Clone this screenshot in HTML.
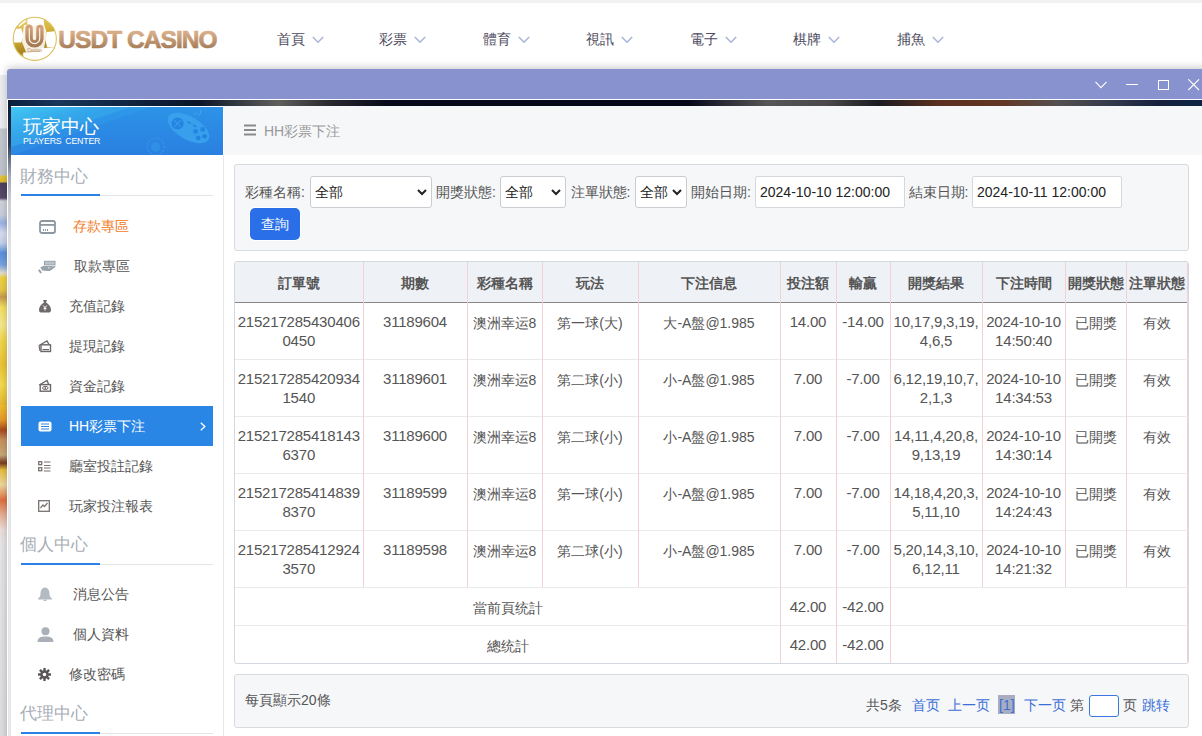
<!DOCTYPE html>
<html><head><meta charset="utf-8">
<style>
*{box-sizing:border-box;margin:0;padding:0}
html,body{width:1202px;height:736px;overflow:hidden;background:#fff;font-family:"Liberation Sans",sans-serif;color:#555}
.abs{position:absolute}
#topstrip{left:0;top:0;width:1202px;height:3px;background:#f1f1f1}
#header{left:0;top:3px;width:1202px;height:72px;background:#fff}
.nav{position:absolute;top:28px;font-size:14px;color:#4d4b5e;line-height:16px;white-space:nowrap}
.nav svg{position:absolute;left:35px;top:5px}
#bgstrip{left:0;top:75px;width:8px;height:661px;background:linear-gradient(180deg,#eceef1 0px,#eeeff2 53px,#c4c9d1 54px,#bfc4cc 100px,#e6c43a 101px,#e0bc30 107px,#4e4262 108px,#574a68 123px,#d2d4da 126px,#c8cedc 140px,#9ab4e4 148px,#d8def0 158px,#c4d2ee 168px,#5c90dc 178px,#7aa4e2 190px,#e4e0d0 198px,#f0d242 203px,#e8c848 215px,#c89a50 222px,#f4e060 232px,#f6ea90 250px,#f2d84e 265px,#ecc438 290px,#f4dc50 310px,#e8b830 330px,#f0c030 325px,#e89a28 345px,#a84a20 355px,#c89060 365px,#c8a878 380px,#7a3a20 388px,#e8c040 395px,#f0d8a0 410px,#e07040 425px,#e8b098 440px,#ece0dc 455px,#e6e6e8 470px,#dedee0 661px)}
#win{left:7px;top:69px;width:1220px;height:700px;box-shadow:0 -1px 9px rgba(0,0,0,.24);border-radius:3px 3px 0 0;background:#fff}
#title{left:0;top:0;width:1220px;height:30px;background:#8792cf;border-radius:3px 3px 0 0}
#strip{left:1px;top:31px;width:1219px;height:6px;background:linear-gradient(90deg,#0b1e3e 0px,#173659 50px,#0a1528 190px,#5f5f5c 270px,#2a2a30 320px,#060a1a 380px,#05081a 680px,#575757 760px,#4a4848 820px,#1a1a22 870px,#5a3020 930px,#633523 990px,#545050 1050px,#30364a 1110px,#16203e 1150px,#0c2444 1195px)}
#leftedge{left:1px;top:31px;width:2.5px;height:680px;background:linear-gradient(180deg,#0b1a35 0,#1a2640 25px,#2e3a54 45px,#6a7488 60px,#a0a8b8 75px,#c8ccd3 100px,#e2e4e7 150px,#e8e8ea 680px)}
#side{left:10.5px;top:106px;width:213px;height:640px;background:#fff;border-right:1px solid #e4e6ea}
#sidehead{left:10.5px;top:106.5px;width:212.5px;height:48px;background:#2a8ae4;overflow:hidden}
.sec{position:absolute;left:20px;font-size:17px;color:#a7adb5;line-height:20px}
.secline{position:absolute;left:21px;width:192px;height:1px;background:#e1e4e8}
.secline:before{content:"";position:absolute;left:0;top:-1px;width:79px;height:2px;background:#2b82e4}
.item{position:absolute;left:21px;width:192px;height:40px;font-size:14px;color:#555;line-height:40px}
.item .t{position:absolute;left:48px;top:0}
.item svg{position:absolute;left:17px;top:13px}
.item.sel{background:#2a86e5;color:#fff}
#main{left:223px;top:106px;width:979px;height:630px;background:#fff}
#crumb{left:224px;top:106px;width:978px;height:49px;background:#f6f7f9}
.panel{position:absolute;background:#f6f7f9;border:1px solid #d7dbdf;border-radius:3px}
.lbl{position:absolute;font-size:14px;color:#555;line-height:16px;top:184px}
.sel-box{position:absolute;top:176px;height:32px;background:#fff;border:1px solid #c9cdd2;border-radius:3px;font-size:14px;color:#222;line-height:30px;padding-left:4px}
.sel-box svg{position:absolute;right:4.5px;top:12px}
.inp{position:absolute;top:176px;width:150px;height:32px;background:#fff;border:1px solid #d5d8dc;border-radius:2px;font-size:14px;color:#222;line-height:30px;padding-left:4px}
#btn{left:250px;top:208px;width:50px;height:32px;background:#2b6fe8;border-radius:5px;color:#fff;font-size:14px;line-height:32px;text-align:center;box-shadow:0 0 0 1px #fff}
.th{position:absolute;top:0.5px;height:40px;line-height:40px;text-align:center;font-weight:bold;font-size:14px;color:#555;white-space:nowrap}
.td.s{padding-top:2px;line-height:37px}
.td.s.n{padding-top:0}
.td.n{font-size:15px;letter-spacing:-0.2px;padding-top:9px}
.td{position:absolute;text-align:center;font-size:14px;line-height:19px;padding-top:11px;color:#555;white-space:nowrap}
</style></head><body>
<div id="topstrip" class="abs"></div>
<div id="header" class="abs">
  <svg class="abs" style="left:10px;top:11px" width="50" height="50" viewBox="0 0 50 50">
    <defs>
      <linearGradient id="gold" x1="0" y1="0" x2="0.3" y2="1">
        <stop offset="0" stop-color="#ecd77e"/><stop offset="0.45" stop-color="#d7b53c"/><stop offset="0.8" stop-color="#a98420"/><stop offset="1" stop-color="#e4cf7a"/>
      </linearGradient>
      <linearGradient id="bronze" x1="0" y1="0" x2="0" y2="1">
        <stop offset="0" stop-color="#d2a07a"/><stop offset="1" stop-color="#a57a55"/>
      </linearGradient>
    </defs>
    <circle cx="24.8" cy="24.8" r="21.6" fill="url(#gold)"/>
    <g fill="#fff">
      <polygon points="17.3,3.6 33.6,3.6 34,10.2 26,11.5 17.3,10.2"/>
      <polygon points="3.5,15 11.2,14.6 13.5,22 11.2,28.5 3.5,28.5"/>
      <polygon points="37,18 46.5,17 47,26 46.5,33.3 37,33.3 35.5,26"/>
      <polygon points="13.2,38.5 30,37.7 30,47 20,47 13.2,44"/>
      <polygon points="30,34.5 44,33.3 42,42 30,45"/>
      <polygon points="8,11.5 15.5,5.8 16.3,7.2 9,12.8"/>
      <polygon points="14,11 34,10 37,20 34,34 30,37 16,38 12,28 13,18" opacity="0.85"/>
    </g>
    <circle cx="24.8" cy="24.8" r="21.6" fill="none" stroke="#dcc060" stroke-width="1.1"/>
    <path d="M19.1,14.4 V24.5 A5.4,5.4 0 0 0 29.9,24.5 V14.4" fill="none" stroke="url(#bronze)" stroke-width="7.4" stroke-linecap="round"/>
    <path d="M19.3,14.6 V24.5 A5.2,5.2 0 0 0 29.7,24.5 V14.6" fill="none" stroke="#fbf4ea" stroke-width="1.2" stroke-linecap="round"/>
    <text x="24.5" y="38.3" font-family="Liberation Sans" font-size="4.6" font-weight="bold" fill="#caa78e" text-anchor="middle" letter-spacing="-0.1">Casino</text>
  </svg>
  <svg class="abs" style="left:57px;top:19px" width="170" height="30" viewBox="0 0 170 30">
    <defs>
      <linearGradient id="tg" x1="0" y1="0" x2="0" y2="1">
        <stop offset="0.25" stop-color="#d7ad87"/><stop offset="0.9" stop-color="#9f7652"/>
      </linearGradient>
    </defs>
    <text x="1.3" y="26.1" font-family="Liberation Sans" font-weight="bold" font-size="24.5" letter-spacing="-0.95" fill="url(#tg)" stroke="url(#tg)" stroke-width="0.7">USDT CASINO</text>
  </svg>
  <div class="nav" style="left:276.5px">首頁<svg width="12" height="8" viewBox="0 0 12 8"><path d="M0.8,1 L6,6.2 L11.2,1" fill="none" stroke="#a9b3d6" stroke-width="1.5"/></svg></div>
  <div class="nav" style="left:379.0px">彩票<svg width="12" height="8" viewBox="0 0 12 8"><path d="M0.8,1 L6,6.2 L11.2,1" fill="none" stroke="#a9b3d6" stroke-width="1.5"/></svg></div>
  <div class="nav" style="left:482.5px">體育<svg width="12" height="8" viewBox="0 0 12 8"><path d="M0.8,1 L6,6.2 L11.2,1" fill="none" stroke="#a9b3d6" stroke-width="1.5"/></svg></div>
  <div class="nav" style="left:586.0px">視訊<svg width="12" height="8" viewBox="0 0 12 8"><path d="M0.8,1 L6,6.2 L11.2,1" fill="none" stroke="#a9b3d6" stroke-width="1.5"/></svg></div>
  <div class="nav" style="left:689.5px">電子<svg width="12" height="8" viewBox="0 0 12 8"><path d="M0.8,1 L6,6.2 L11.2,1" fill="none" stroke="#a9b3d6" stroke-width="1.5"/></svg></div>
  <div class="nav" style="left:793.0px">棋牌<svg width="12" height="8" viewBox="0 0 12 8"><path d="M0.8,1 L6,6.2 L11.2,1" fill="none" stroke="#a9b3d6" stroke-width="1.5"/></svg></div>
  <div class="nav" style="left:896.5px">捕魚<svg width="12" height="8" viewBox="0 0 12 8"><path d="M0.8,1 L6,6.2 L11.2,1" fill="none" stroke="#a9b3d6" stroke-width="1.5"/></svg></div>
  
</div>
<div id="bgstrip" class="abs"></div>
<div id="win" class="abs">
  <div id="title" class="abs">
    <svg class="abs" style="left:1087.5px;top:12px" width="13" height="8" viewBox="0 0 13 8"><path d="M0.5,0.8 L6,6.6 L11.5,0.8" fill="none" stroke="#fff" stroke-width="1.1"/></svg>
    <div class="abs" style="left:1119px;top:15px;width:12px;height:1.3px;background:#fff"></div>
    <div class="abs" style="left:1151px;top:11px;width:11px;height:10px;border:1.2px solid #fff"></div>
    <svg class="abs" style="left:1181px;top:10px" width="12" height="12" viewBox="0 0 12 12"><path d="M0.3,0.3 L11,11 M11,0.3 L0.3,11" stroke="#fff" stroke-width="1.1"/></svg>
  </div>
  <div id="strip" class="abs"></div>
  <div id="leftedge" class="abs"></div>
</div>
<div id="side" class="abs"></div>
<div id="sidehead" class="abs">
  <svg class="abs" style="left:0;top:0" width="213" height="49" viewBox="0 0 213 49">
    <defs>
      <linearGradient id="shg" x1="0" y1="0" x2="1" y2="1" gradientUnits="objectBoundingBox">
        <stop offset="0" stop-color="#44cdf4"/><stop offset="0.35" stop-color="#36aaeb"/><stop offset="1" stop-color="#2a8ae4"/>
      </linearGradient>
      <linearGradient id="shb" x1="0" y1="0" x2="0" y2="1">
        <stop offset="0" stop-color="#2c93e8"/><stop offset="1" stop-color="#2a7fe0"/>
      </linearGradient>
    </defs>
    <rect x="0" y="0" width="213" height="49" fill="url(#shb)"/>
    <polygon points="0,0 120,0 0,40" fill="url(#shg)" opacity="0.9"/>
    <polygon points="0,38 110,0 140,0 0,49" fill="#35a6ec" opacity="0.25"/>
    <g opacity="0.9">
      <ellipse cx="177.5" cy="21" rx="23" ry="11.5" transform="rotate(30 177.5 21)" fill="#3aa2ee"/>
      <circle cx="166.6" cy="16.6" r="6" fill="#2384e2"/>
      <path d="M163,13 L170,20 M170,13 L163,20" stroke="#3597ea" stroke-width="1.6"/>
      <path d="M176.5,14.8 L180,16.6 M182,18 L185.5,19.8" stroke="#2384e2" stroke-width="1.6"/>
      <circle cx="184.6" cy="24.4" r="2.4" fill="#2384e2"/><circle cx="191.7" cy="22.4" r="2.4" fill="#2384e2"/><circle cx="187.3" cy="31" r="2.4" fill="#2384e2"/><circle cx="193.6" cy="29.3" r="2.4" fill="#2384e2"/>
      <path d="M183,7.8 C184,4.5 186,6.5 187.5,7.5 C189,8.5 190,6 189.5,3" stroke="#48aaf0" stroke-width="1" fill="none"/>
    </g>
    <circle cx="144.7" cy="39.5" r="8.5" fill="none" stroke="#3d9cec" stroke-width="1.2" stroke-dasharray="2 1.5" opacity="0.7"/>
    <circle cx="144.7" cy="40" r="4.5" fill="#3598ea" opacity="0.6"/>
  </svg>
  <div class="abs" style="left:12.5px;top:9px;font-size:19px;line-height:22px;color:#fff">玩家中心</div>
  <div class="abs" style="left:12.5px;top:29px;font-size:8.8px;line-height:10px;color:#fff;word-spacing:1.5px;letter-spacing:-0.2px">PLAYERS CENTER</div>
</div>
<div class="sec" style="top:166.5px">財務中心</div><div class="secline" style="top:194.5px"></div>
<div class="item" style="top:206px"><svg style="left:17.5px;top:13.5px" width="17" height="14" viewBox="0 0 17 14"><rect x="1" y="1" width="15" height="12" rx="2" fill="none" stroke="#8e979f" stroke-width="1.8"/><rect x="1" y="4" width="15" height="1.8" fill="#8e979f"/><rect x="4" y="9" width="1" height="2" fill="#8e979f"/><rect x="6" y="9" width="1" height="2" fill="#8e979f"/><rect x="8" y="9" width="1" height="2" fill="#8e979f"/></svg><span class="t" style="left:52px"><span style="color:#f07b26">存款專區</span></span></div>
<div class="item" style="top:246px"><svg style="left:17px;top:14px" width="19" height="14" viewBox="0 0 19 14"><rect x="6.5" y="1.3" width="10.5" height="3.6" fill="#bcc4cb" stroke="#97a2ab" stroke-width="1"/><path d="M2.3,7.6 L5,6 H14 Q15.3,6.4 14,7.5 H9.6 L10.6,8.6 L16.2,6 Q17.8,5.6 17.4,7 L12.6,10.4 Q11.2,11.2 9.2,11 L4.4,10.6 Z" fill="#97a2ab"/><path d="M0.8,9.8 L3.2,13" stroke="#97a2ab" stroke-width="2"/></svg><span class="t" style="left:52.5px">取款專區</span></div>
<div class="item" style="top:286px"><svg style="left:17px;top:13px" width="14" height="14" viewBox="0 0 14 14"><path d="M5,1 H9 L8,3.5 C11,5 13,8 13,11 C13,13 12,13.5 10,13.5 H4 C2,13.5 1,13 1,11 C1,8 3,5 6,3.5 Z" fill="#6f6a6a"/><path d="M5.2,6.5 L7,8.5 L8.8,6.5 M7,8.5 V11.5 M5.5,9.3 H8.5" stroke="#fff" stroke-width="1" fill="none"/></svg><span class="t" style="left:48px">充值記錄</span></div>
<div class="item" style="top:326px"><svg style="left:17px;top:14px" width="14" height="13" viewBox="0 0 14 13"><path d="M1,5.5 L9,1 L11,4.5" fill="none" stroke="#6d6868" stroke-width="1.4"/><path d="M1,5.5 L2,11" stroke="#6d6868" stroke-width="1.2"/><rect x="3" y="4.8" width="9.5" height="6.7" fill="none" stroke="#6d6868" stroke-width="1.4"/><rect x="4.5" y="9" width="6.5" height="1.2" fill="#6d6868"/></svg><span class="t" style="left:48px">提現記錄</span></div>
<div class="item" style="top:366px"><svg style="left:17px;top:13px" width="14" height="14" viewBox="0 0 14 14"><path d="M1.3,6 L9,1.5 L10.5,5" fill="none" stroke="#6d6868" stroke-width="1.4"/><rect x="2.2" y="5.6" width="10.3" height="6.6" fill="none" stroke="#6d6868" stroke-width="1.4"/><ellipse cx="7.3" cy="8.9" rx="2.8" ry="1.6" fill="none" stroke="#6d6868" stroke-width="1"/><rect x="6.7" y="7.6" width="1.2" height="2.6" fill="#6d6868"/></svg><span class="t" style="left:48px">資金記錄</span></div>
<div class="item sel" style="top:406px"><svg style="left:17px;top:14.5px" width="14" height="11" viewBox="0 0 14 11"><rect x="0.5" y="0.5" width="13" height="10" rx="2" fill="#fff"/><path d="M3,3 H11 M3,5.5 H11 M3,8 H11" stroke="#2a86e5" stroke-width="1.2"/></svg><span class="t" style="left:48px">HH彩票下注</span><svg style="left:178.5px;top:15.5px" width="6" height="9" viewBox="0 0 6 9"><path d="M0.8,0.8 L4.8,4.5 L0.8,8.2" fill="none" stroke="#fff" stroke-width="1.3"/></svg></div>
<div class="item" style="top:446px"><svg style="left:17px;top:14.5px" width="13" height="11" viewBox="0 0 13 11"><rect x="0.7" y="0.7" width="3" height="3" fill="none" stroke="#7a7070" stroke-width="1.3"/><rect x="0.7" y="6.7" width="3" height="3" fill="none" stroke="#7a7070" stroke-width="1.3"/><path d="M6,1 H12.5 M6,4.5 H12.5 M6,7 H12.5 M6,10 H12.5" stroke="#7a7070" stroke-width="1.2"/></svg><span class="t" style="left:48px">廳室投註記錄</span></div>
<div class="item" style="top:486px"><svg style="left:17px;top:14px" width="12" height="12" viewBox="0 0 12 12"><rect x="0.7" y="0.7" width="10.6" height="10.6" fill="none" stroke="#7a7070" stroke-width="1.3"/><path d="M2.5,8 L5,5 L6.5,6.5 L9.5,3" fill="none" stroke="#7a7070" stroke-width="1.2"/></svg><span class="t" style="left:48px">玩家投注報表</span></div>
<div class="sec" style="top:534.5px">個人中心</div><div class="secline" style="top:563.5px"></div>
<div class="item" style="top:574px"><svg style="left:16px;top:12.5px" width="16" height="15" viewBox="0 0 16 15"><path d="M8,0.5 C4.5,1 3.5,4 3.5,7 C3.5,9.5 2.5,10.5 1,11.5 V12.5 H15 V11.5 C13.5,10.5 12.5,9.5 12.5,7 C12.5,4 11.5,1 8,0.5 Z" fill="#b4bac1"/><path d="M6.5,13.3 H9.5" stroke="#b4bac1" stroke-width="1.3"/></svg><span class="t" style="left:51.5px">消息公告</span></div>
<div class="item" style="top:614px"><svg style="left:16px;top:12.5px" width="17" height="15" viewBox="0 0 17 15"><circle cx="8.5" cy="4.3" r="4" fill="#a9b0b8"/><path d="M0.5,15 C0.5,10.5 4,9.5 8.5,9.5 C13,9.5 16.5,10.5 16.5,15 Z" fill="#a9b0b8"/></svg><span class="t" style="left:51.5px">個人資料</span></div>
<div class="item" style="top:654px"><svg style="left:17px;top:14px" width="13" height="13" viewBox="0 0 13 13"><g fill="#5b5656"><circle cx="6.5" cy="6.5" r="4.3"/><rect x="5.3" y="0" width="2.4" height="13"/><rect x="0" y="5.3" width="13" height="2.4"/><rect x="5.3" y="0" width="2.4" height="13" transform="rotate(45 6.5 6.5)"/><rect x="5.3" y="0" width="2.4" height="13" transform="rotate(-45 6.5 6.5)"/></g><circle cx="6.5" cy="6.5" r="1.8" fill="#fff"/></svg><span class="t" style="left:48px">修改密碼</span></div>
<div class="sec" style="top:704px">代理中心</div><div class="secline" style="top:732.5px"></div>

<div id="main" class="abs"></div>
<div class="abs" style="left:223px;top:155px;width:1px;height:600px;background:#e4e8ec"></div>
<div id="crumb" class="abs">
  <svg class="abs" style="left:20px;top:18px" width="12" height="12" viewBox="0 0 12 12"><path d="M0,1.5 H12 M0,6 H12 M0,10.5 H12" stroke="#8a8a8a" stroke-width="1.8"/></svg>
  <div class="abs" style="left:40px;top:16.5px;font-size:14px;line-height:16px;color:#999">HH彩票下注</div>
</div>
<div class="panel" style="left:234px;top:164px;width:955px;height:87px"></div>
<div class="lbl" style="left:245px">彩種名稱:</div>
<div class="sel-box" style="left:310px;width:122px">全部<svg width="10" height="7" viewBox="0 0 10 7"><path d="M1,1 L5,5 L9,1" fill="none" stroke="#222" stroke-width="2"/></svg></div>
<div class="lbl" style="left:436px">開獎狀態:</div>
<div class="sel-box" style="left:500px;width:66px">全部<svg width="10" height="7" viewBox="0 0 10 7"><path d="M1,1 L5,5 L9,1" fill="none" stroke="#222" stroke-width="2"/></svg></div>
<div class="lbl" style="left:570.5px">注單狀態:</div>
<div class="sel-box" style="left:635px;width:52px">全部<svg width="10" height="7" viewBox="0 0 10 7"><path d="M1,1 L5,5 L9,1" fill="none" stroke="#222" stroke-width="2"/></svg></div>
<div class="lbl" style="left:691px">開始日期:</div>
<div class="inp" style="left:755px">2024-10-10 12:00:00</div>
<div class="lbl" style="left:908.5px">結束日期:</div>
<div class="inp" style="left:972px">2024-10-11 12:00:00</div>
<div id="btn" class="abs">查詢</div>
<div id="tbl" class="abs" style="left:234px;top:261px;width:955px;height:403px;border:1px solid #d3d9de;border-radius:3px;overflow:hidden;background:#fff">
<div class="abs" style="left:0;top:0;width:100%;height:40px;background:#eef1f5"></div>
<div class="abs" style="left:0;top:40px;width:100%;height:1px;background:#8e8686"></div>
<div class="abs" style="left:952px;top:0;width:1px;height:402px;background:#f3d0d3"></div>
<div class="abs" style="left:0;top:97px;width:100%;height:1px;background:#eaeaea"></div>
<div class="abs" style="left:0;top:154px;width:100%;height:1px;background:#eaeaea"></div>
<div class="abs" style="left:0;top:211px;width:100%;height:1px;background:#eaeaea"></div>
<div class="abs" style="left:0;top:268px;width:100%;height:1px;background:#eaeaea"></div>
<div class="abs" style="left:0;top:325px;width:100%;height:1px;background:#eaeaea"></div>
<div class="abs" style="left:0;top:363px;width:100%;height:1px;background:#eaeaea"></div>
<div class="abs" style="left:128px;top:0;width:1px;height:325px;background:#f3d0d3"></div>
<div class="abs" style="left:232px;top:0;width:1px;height:325px;background:#f3d0d3"></div>
<div class="abs" style="left:307px;top:0;width:1px;height:325px;background:#f3d0d3"></div>
<div class="abs" style="left:403px;top:0;width:1px;height:325px;background:#f3d0d3"></div>
<div class="abs" style="left:545px;top:0;width:1px;height:402px;background:#f3d0d3"></div>
<div class="abs" style="left:601px;top:0;width:1px;height:402px;background:#f3d0d3"></div>
<div class="abs" style="left:655px;top:0;width:1px;height:402px;background:#f3d0d3"></div>
<div class="abs" style="left:747px;top:0;width:1px;height:325px;background:#f3d0d3"></div>
<div class="abs" style="left:830px;top:0;width:1px;height:325px;background:#f3d0d3"></div>
<div class="abs" style="left:891px;top:0;width:1px;height:325px;background:#f3d0d3"></div>
<div class="th" style="left:-0.5px;width:128.5px">訂單號</div>
<div class="th" style="left:128px;width:104px">期數</div>
<div class="th" style="left:232px;width:75px">彩種名稱</div>
<div class="th" style="left:307px;width:96px">玩法</div>
<div class="th" style="left:403px;width:142px">下注信息</div>
<div class="th" style="left:545px;width:56px">投注額</div>
<div class="th" style="left:601px;width:54px">輸贏</div>
<div class="th" style="left:655px;width:92px">開獎結果</div>
<div class="th" style="left:747px;width:83px">下注時間</div>
<div class="th" style="left:830px;width:61px">開獎狀態</div>
<div class="th" style="left:891px;width:62px">注單狀態</div>
<div class="td n" style="left:-0.5px;width:128.5px;top:41px">215217285430406<br>0450</div>
<div class="td n" style="left:128px;width:104px;top:41px">31189604</div>
<div class="td" style="left:232px;width:75px;top:41px">澳洲幸运8</div>
<div class="td" style="left:307px;width:96px;top:41px">第一球(大)</div>
<div class="td" style="left:403px;width:142px;top:41px">大-A盤@1.985</div>
<div class="td n" style="left:545px;width:56px;top:41px">14.00</div>
<div class="td n" style="left:601px;width:54px;top:41px">-14.00</div>
<div class="td n" style="left:655px;width:92px;top:41px">10,17,9,3,19,<br>4,6,5</div>
<div class="td n" style="left:747px;width:83px;top:41px">2024-10-10<br>14:50:40</div>
<div class="td" style="left:830px;width:61px;top:41px">已開獎</div>
<div class="td" style="left:891px;width:62px;top:41px">有效</div>
<div class="td n" style="left:-0.5px;width:128.5px;top:98px">215217285420934<br>1540</div>
<div class="td n" style="left:128px;width:104px;top:98px">31189601</div>
<div class="td" style="left:232px;width:75px;top:98px">澳洲幸运8</div>
<div class="td" style="left:307px;width:96px;top:98px">第二球(小)</div>
<div class="td" style="left:403px;width:142px;top:98px">小-A盤@1.985</div>
<div class="td n" style="left:545px;width:56px;top:98px">7.00</div>
<div class="td n" style="left:601px;width:54px;top:98px">-7.00</div>
<div class="td n" style="left:655px;width:92px;top:98px">6,12,19,10,7,<br>2,1,3</div>
<div class="td n" style="left:747px;width:83px;top:98px">2024-10-10<br>14:34:53</div>
<div class="td" style="left:830px;width:61px;top:98px">已開獎</div>
<div class="td" style="left:891px;width:62px;top:98px">有效</div>
<div class="td n" style="left:-0.5px;width:128.5px;top:155px">215217285418143<br>6370</div>
<div class="td n" style="left:128px;width:104px;top:155px">31189600</div>
<div class="td" style="left:232px;width:75px;top:155px">澳洲幸运8</div>
<div class="td" style="left:307px;width:96px;top:155px">第二球(小)</div>
<div class="td" style="left:403px;width:142px;top:155px">小-A盤@1.985</div>
<div class="td n" style="left:545px;width:56px;top:155px">7.00</div>
<div class="td n" style="left:601px;width:54px;top:155px">-7.00</div>
<div class="td n" style="left:655px;width:92px;top:155px">14,11,4,20,8,<br>9,13,19</div>
<div class="td n" style="left:747px;width:83px;top:155px">2024-10-10<br>14:30:14</div>
<div class="td" style="left:830px;width:61px;top:155px">已開獎</div>
<div class="td" style="left:891px;width:62px;top:155px">有效</div>
<div class="td n" style="left:-0.5px;width:128.5px;top:212px">215217285414839<br>8370</div>
<div class="td n" style="left:128px;width:104px;top:212px">31189599</div>
<div class="td" style="left:232px;width:75px;top:212px">澳洲幸运8</div>
<div class="td" style="left:307px;width:96px;top:212px">第一球(小)</div>
<div class="td" style="left:403px;width:142px;top:212px">小-A盤@1.985</div>
<div class="td n" style="left:545px;width:56px;top:212px">7.00</div>
<div class="td n" style="left:601px;width:54px;top:212px">-7.00</div>
<div class="td n" style="left:655px;width:92px;top:212px">14,18,4,20,3,<br>5,11,10</div>
<div class="td n" style="left:747px;width:83px;top:212px">2024-10-10<br>14:24:43</div>
<div class="td" style="left:830px;width:61px;top:212px">已開獎</div>
<div class="td" style="left:891px;width:62px;top:212px">有效</div>
<div class="td n" style="left:-0.5px;width:128.5px;top:269px">215217285412924<br>3570</div>
<div class="td n" style="left:128px;width:104px;top:269px">31189598</div>
<div class="td" style="left:232px;width:75px;top:269px">澳洲幸运8</div>
<div class="td" style="left:307px;width:96px;top:269px">第二球(小)</div>
<div class="td" style="left:403px;width:142px;top:269px">小-A盤@1.985</div>
<div class="td n" style="left:545px;width:56px;top:269px">7.00</div>
<div class="td n" style="left:601px;width:54px;top:269px">-7.00</div>
<div class="td n" style="left:655px;width:92px;top:269px">5,20,14,3,10,<br>6,12,11</div>
<div class="td n" style="left:747px;width:83px;top:269px">2024-10-10<br>14:21:32</div>
<div class="td" style="left:830px;width:61px;top:269px">已開獎</div>
<div class="td" style="left:891px;width:62px;top:269px">有效</div>
<div class="td s" style="left:0;width:545px;top:326px">當前頁统計</div>
<div class="td s n" style="left:545px;width:56px;top:326px">42.00</div>
<div class="td s n" style="left:601px;width:54px;top:326px">-42.00</div>
<div class="td s" style="left:0;width:545px;top:364px">總统計</div>
<div class="td s n" style="left:545px;width:56px;top:364px">42.00</div>
<div class="td s n" style="left:601px;width:54px;top:364px">-42.00</div>
</div>
<div class="panel" style="left:234px;top:674px;width:955px;height:54px"></div>
<div class="abs" style="left:245px;top:692px;font-size:14px;line-height:16px;color:#555">每頁顯示20條</div>
<div class="abs pg" style="left:866px;top:697px;font-size:14px;line-height:16px;color:#555;white-space:nowrap">共5条</div>
<div class="abs pg" style="left:911.5px;top:697px;font-size:14px;line-height:16px;color:#3c6fd6">首页</div>
<div class="abs pg" style="left:948px;top:697px;font-size:14px;line-height:16px;color:#3c6fd6">上一页</div>
<div class="abs" style="left:998px;top:695px;width:17px;height:19px;background:#a8adc0"></div>
<div class="abs pg" style="left:999px;top:697px;font-size:14px;line-height:16px;color:#3c6fd6">[1]</div>
<div class="abs pg" style="left:1024px;top:697px;font-size:14px;line-height:16px;color:#3c6fd6">下一页</div>
<div class="abs pg" style="left:1069.5px;top:697px;font-size:14px;line-height:16px;color:#555">第</div>
<div class="abs" style="left:1089px;top:695px;width:30px;height:22px;background:#fff;border:1px solid #3a78de;border-radius:3px"></div>
<div class="abs pg" style="left:1123px;top:697px;font-size:14px;line-height:16px;color:#555">页</div>
<div class="abs pg" style="left:1141.5px;top:697px;font-size:14px;line-height:16px;color:#3c6fd6">跳转</div>

</body></html>
